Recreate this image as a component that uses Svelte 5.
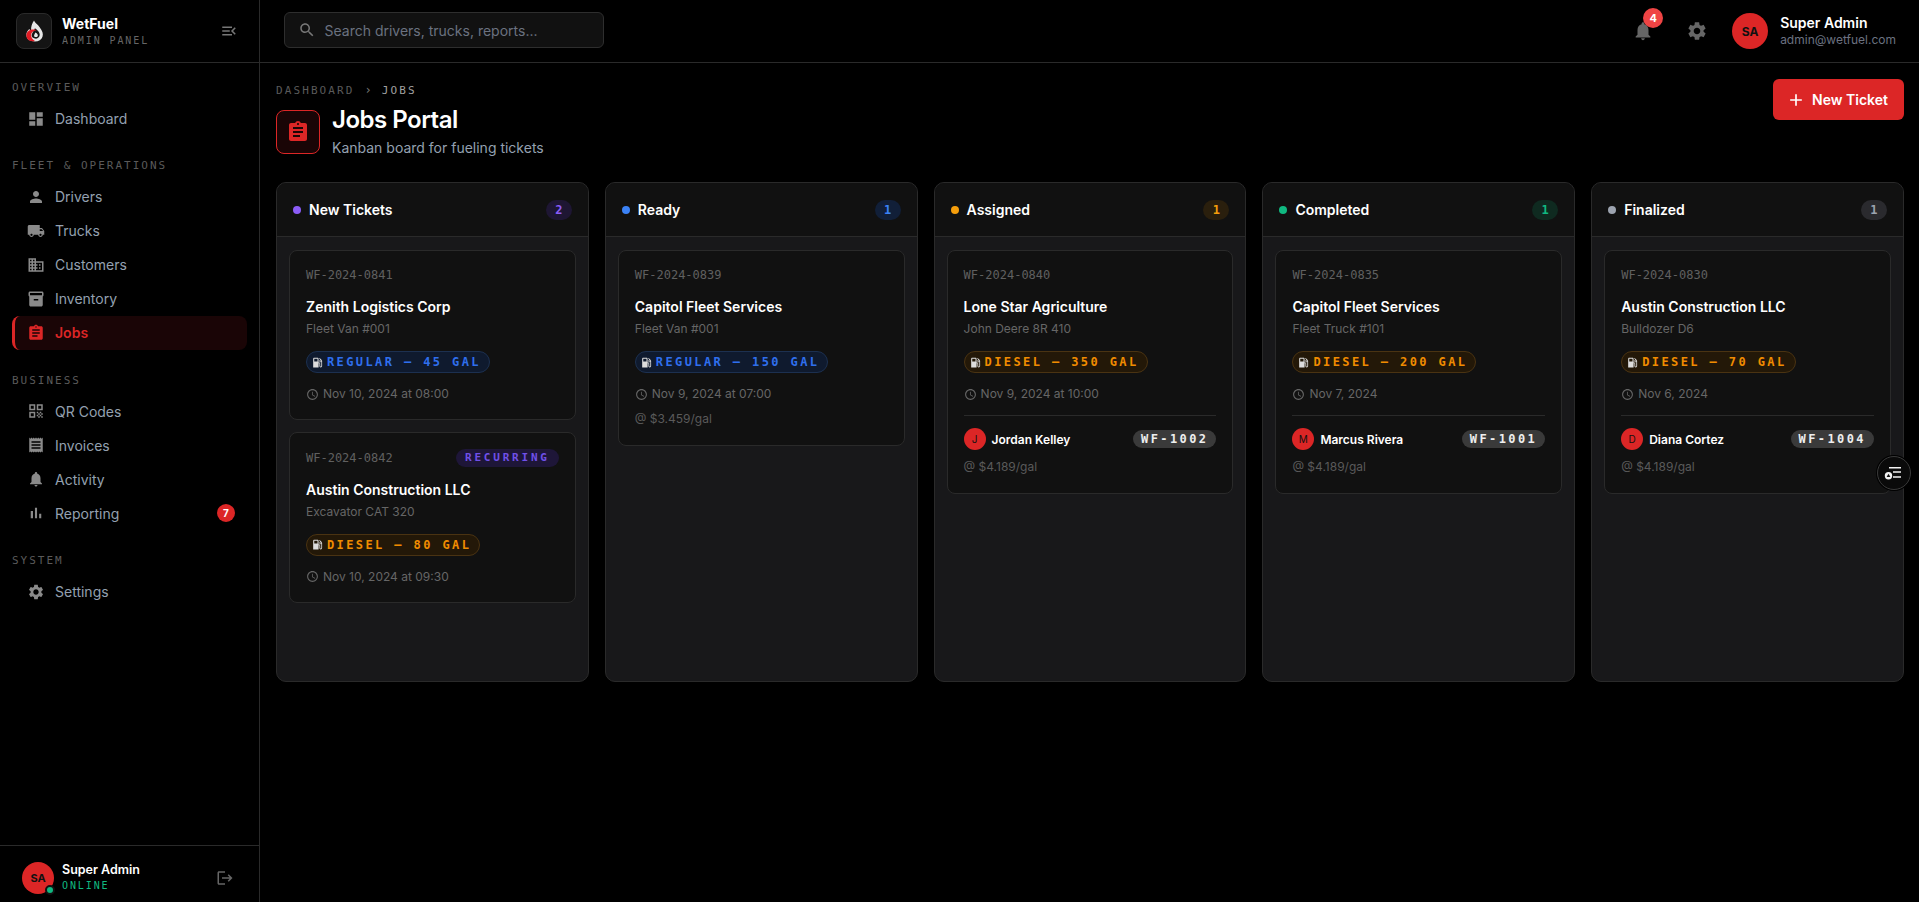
<script>
  const icons = {
    dashboard: 'M3 13h8V3H3v10zm0 8h8v-6H3v6zm10 0h8V11h-8v10zm0-18v6h8V3h-8z',
    person: 'M12 12c2.21 0 4-1.79 4-4s-1.79-4-4-4-4 1.79-4 4 1.79 4 4 4zm0 2c-2.67 0-8 1.34-8 4v2h16v-2c0-2.66-5.33-4-8-4z',
    truck: 'M20 8h-3V4H3c-1.1 0-2 .9-2 2v11h2c0 1.66 1.34 3 3 3s3-1.34 3-3h6c0 1.66 1.34 3 3 3s3-1.34 3-3h2v-5l-3-4zM6 18.5c-.83 0-1.5-.67-1.5-1.5s.67-1.5 1.5-1.5 1.5.67 1.5 1.5-.67 1.5-1.5 1.5zm13.5-9l1.96 2.5H17V9.5h2.5zm-1.5 9c-.83 0-1.5-.67-1.5-1.5s.67-1.5 1.5-1.5 1.5.67 1.5 1.5-.67 1.5-1.5 1.5z',
    business: 'M12 7V3H2v18h20V7H12zM6 19H4v-2h2v2zm0-4H4v-2h2v2zm0-4H4V9h2v2zm0-4H4V5h2v2zm4 12H8v-2h2v2zm0-4H8v-2h2v2zm0-4H8V9h2v2zm0-4H8V5h2v2zm10 12h-8v-2h2v-2h-2v-2h2v-2h-2V9h8v10zm-2-8h-2v2h2v-2zm0 4h-2v2h2v-2z',
    inventory: 'M20 2H4c-1 0-2 .9-2 2v3.01c0 .72.43 1.34 1 1.69V20c0 1.1 1.1 2 2 2h14c.9 0 2-.9 2-2V8.7c.57-.35 1-.97 1-1.69V4c0-1.1-1-2-2-2zm-5 12H9v-2h6v2zm5-7H4V4l16-.02V7z',
    assignment: 'M19 3h-4.18C14.4 1.84 13.3 1 12 1c-1.3 0-2.4.84-2.82 2H5c-1.1 0-2 .9-2 2v14c0 1.1.9 2 2 2h14c1.1 0 2-.9 2-2V5c0-1.1-.9-2-2-2zm-7 0c.55 0 1 .45 1 1s-.45 1-1 1-1-.45-1-1 .45-1 1-1zm2 14H7v-2h7v2zm3-4H7v-2h10v2zm0-4H7V7h10v2z',
    qr: 'M3 11h8V3H3v8zm2-6h4v4H5V5zM3 21h8v-8H3v8zm2-6h4v4H5v-4zM13 3v8h8V3h-8zm6 6h-4V5h4v4zM19 19h2v2h-2zM13 13h2v2h-2zM15 15h2v2h-2zM13 17h2v2h-2zM15 19h2v2h-2zM17 17h2v2h-2zM17 13h2v2h-2zM19 15h2v2h-2z',
    receipt: 'M18 17H6v-2h12v2zm0-4H6v-2h12v2zm0-4H6V7h12v2zM3 22l1.5-1.5L6 22l1.5-1.5L9 22l1.5-1.5L12 22l1.5-1.5L15 22l1.5-1.5L18 22l1.5-1.5L21 22V2l-1.5 1.5L18 2l-1.5 1.5L15 2l-1.5 1.5L12 2l-1.5 1.5L9 2 7.5 3.5 6 2 4.5 3.5 3 2v20z',
    bell: 'M12 22c1.1 0 2-.9 2-2h-4c0 1.1.89 2 2 2zm6-6v-5c0-3.07-1.64-5.64-4.5-6.32V4c0-.83-.67-1.5-1.5-1.5s-1.5.67-1.5 1.5v.68C7.63 5.36 6 7.92 6 11v5l-2 2v1h16v-1l-2-2z',
    chart: 'M5 9.2h3V19H5zM10.6 5h2.8v14h-2.8zm5.6 8H19v6h-2.8z',
    settings: 'M19.14 12.94c.04-.3.06-.61.06-.94 0-.32-.02-.64-.07-.94l2.03-1.58c.18-.14.23-.41.12-.61l-1.92-3.32c-.12-.22-.37-.29-.59-.22l-2.39.96c-.5-.38-1.03-.7-1.62-.94l-.36-2.54c-.04-.24-.24-.41-.48-.41h-3.84c-.24 0-.43.17-.47.41l-.36 2.54c-.59.24-1.13.57-1.62.94l-2.39-.96c-.22-.08-.47 0-.59.22L2.74 8.87c-.12.21-.08.47.12.61l2.03 1.58c-.05.3-.09.63-.09.94s.02.64.07.94l-2.03 1.58c-.18.14-.23.41-.12.61l1.92 3.32c.12.22.37.29.59.22l2.39-.96c.5.38 1.03.7 1.62.94l.36 2.54c.05.24.24.41.48.41h3.84c.24 0 .44-.17.47-.41l.36-2.54c.59-.24 1.13-.56 1.62-.94l2.39.96c.22.08.47 0 .59-.22l1.92-3.32c.12-.22.07-.47-.12-.61l-2.01-1.58zM12 15.6c-1.98 0-3.6-1.62-3.6-3.6s1.62-3.6 3.6-3.6 3.6 1.62 3.6 3.6-1.62 3.6-3.6 3.6z',
    logout: 'M17 7l-1.41 1.41L18.17 11H8v2h10.17l-2.58 2.58L17 17l5-5zM4 5h8V3H4c-1.1 0-2 .9-2 2v14c0 1.1.9 2 2 2h8v-2H4V5z',
    gas: 'M19.77 7.23l.01-.01-3.72-3.72L15 4.56l2.11 2.11c-.94.36-1.61 1.26-1.61 2.33 0 1.38 1.12 2.5 2.5 2.5.36 0 .69-.08 1-.21v7.21c0 .55-.45 1-1 1s-1-.45-1-1V14c0-1.1-.9-2-2-2h-1V5c0-1.1-.9-2-2-2H6c-1.1 0-2 .9-2 2v16h10v-7.5h1.5v5c0 1.38 1.12 2.5 2.5 2.5s2.5-1.12 2.5-2.5V9c0-.69-.28-1.32-.73-1.77zM12 10H6V5h6v5zm6 0c-.55 0-1-.45-1-1s.45-1 1-1 1 .45 1 1-.45 1-1 1z',
    clock: 'M11.99 2C6.47 2 2 6.48 2 12s4.47 10 9.99 10C17.52 22 22 17.52 22 12S17.52 2 11.99 2zM12 20c-4.42 0-8-3.58-8-8s3.58-8 8-8 8 3.58 8 8-3.58 8-8 8zm.5-13H11v6l5.25 3.15.75-1.23-4.5-2.67z',
    add: 'M19 13h-6v6h-2v-6H5v-2h6V5h2v6h6v2z',
    menuOpen: 'M3 18h13v-2H3v2zm0-5h10v-2H3v2zm0-7v2h13V6H3zm18 9.59L17.42 12 21 8.41 19.59 7l-5 5 5 5L21 15.59z',
    search: 'M15.5 14h-.79l-.28-.27C15.41 12.59 16 11.11 16 9.5 16 5.91 13.09 3 9.5 3S3 5.91 3 9.5 5.91 16 9.5 16c1.61 0 3.09-.59 4.23-1.57l.27.28v.79l5 4.99L20.49 19l-4.99-5zm-6 0C7.01 14 5 11.99 5 9.5S7.01 5 9.5 5 14 7.01 14 9.5 11.99 14 9.5 14z'
  };

  const nav = [
    { label: 'OVERVIEW', items: [{ name: 'Dashboard', icon: 'dashboard' }] },
    { label: 'FLEET & OPERATIONS', items: [
      { name: 'Drivers', icon: 'person' },
      { name: 'Trucks', icon: 'truck' },
      { name: 'Customers', icon: 'business' },
      { name: 'Inventory', icon: 'inventory' },
      { name: 'Jobs', icon: 'assignment', active: true }
    ] },
    { label: 'BUSINESS', items: [
      { name: 'QR Codes', icon: 'qr' },
      { name: 'Invoices', icon: 'receipt' },
      { name: 'Activity', icon: 'bell' },
      { name: 'Reporting', icon: 'chart', badge: 7 }
    ] },
    { label: 'SYSTEM', items: [{ name: 'Settings', icon: 'settings' }] }
  ];

  const columns = [
    { title: 'New Tickets', tone: 'purple', count: 2, cards: [
      { id: 'WF-2024-0841', name: 'Zenith Logistics Corp', unit: 'Fleet Van #001', fuel: 'REGULAR — 45 GAL', type: 'regular', date: 'Nov 10, 2024 at 08:00' },
      { id: 'WF-2024-0842', recurring: true, name: 'Austin Construction LLC', unit: 'Excavator CAT 320', fuel: 'DIESEL — 80 GAL', type: 'diesel', date: 'Nov 10, 2024 at 09:30' }
    ] },
    { title: 'Ready', tone: 'blue', count: 1, cards: [
      { id: 'WF-2024-0839', name: 'Capitol Fleet Services', unit: 'Fleet Van #001', fuel: 'REGULAR — 150 GAL', type: 'regular', date: 'Nov 9, 2024 at 07:00', price: '@ $3.459/gal' }
    ] },
    { title: 'Assigned', tone: 'orange', count: 1, cards: [
      { id: 'WF-2024-0840', name: 'Lone Star Agriculture', unit: 'John Deere 8R 410', fuel: 'DIESEL — 350 GAL', type: 'diesel', date: 'Nov 9, 2024 at 10:00', driver: 'Jordan Kelley', initial: 'J', truck: 'WF-1002', price: '@ $4.189/gal' }
    ] },
    { title: 'Completed', tone: 'green', count: 1, cards: [
      { id: 'WF-2024-0835', name: 'Capitol Fleet Services', unit: 'Fleet Truck #101', fuel: 'DIESEL — 200 GAL', type: 'diesel', date: 'Nov 7, 2024', driver: 'Marcus Rivera', initial: 'M', truck: 'WF-1001', price: '@ $4.189/gal' }
    ] },
    { title: 'Finalized', tone: 'gray', count: 1, cards: [
      { id: 'WF-2024-0830', name: 'Austin Construction LLC', unit: 'Bulldozer D6', fuel: 'DIESEL — 70 GAL', type: 'diesel', date: 'Nov 6, 2024', driver: 'Diana Cortez', initial: 'D', truck: 'WF-1004', price: '@ $4.189/gal' }
    ] }
  ];
</script>

{#snippet icon(name, size)}
  <svg class="icon" width={size} height={size} viewBox="0 0 24 24" fill="currentColor" aria-hidden="true"><path d={icons[name]} /></svg>
{/snippet}

<div class="app">
  <aside class="sidebar">
    <div class="brand">
      <div class="logo">
        <svg width="36" height="36" viewBox="0 0 36 36" aria-hidden="true">
          <path fill="#e6e6e6" d="M18 7C19 10 22 11 24 14C27 18 28 21 27 24C26 27 23 29 19 29C14 29 10.500 27 10 23C9.500 20 11 18 13 16C13.500 17 14 17.500 15 17.500C14.500 14 16 10 18 7Z" />
          <path fill="#141414" d="M19 15C22 17 24.500 20 24 22.500C23.500 25 21 26.500 19 26C17 25.500 15.500 24.500 15.500 22.500C15.500 20 18 18 19 15Z" />
          <path fill="#e6e6e6" d="M19.500 19.500C21.500 20.500 22.500 22 22 23.200C21.500 24.500 19.500 24.800 18.500 24C17.500 23 18.500 21.500 19.500 19.500Z" />
          <path fill="#e01b24" d="M10 24C9.500 20 12 17 16 16.500C18 16 20 16.500 21 17.500C17.500 17.500 15 19.500 15 22.500C15 25 16.500 27 19 28.500C15 29.500 11 28 10 24Z" />
        </svg>
      </div>
      <div class="brand-text">
        <div class="brand-name">WetFuel</div>
        <div class="brand-sub">ADMIN PANEL</div>
      </div>
      <span class="collapse">{@render icon('menuOpen', 18)}</span>
    </div>

    <nav class="nav">
      {#each nav as section}
        <section class="nav-section">
          <div class="nav-label">{section.label}</div>
          {#each section.items as item}
            <div class="nav-item" class:active={item.active}>
              {@render icon(item.icon, 18)}
              <span>{item.name}</span>
              {#if item.badge}<b class="nav-badge">{item.badge}</b>{/if}
            </div>
          {/each}
        </section>
      {/each}
    </nav>

    <div class="side-user">
      <div class="avatar av32">SA<i class="online"></i></div>
      <div class="side-user-text">
        <div class="side-name">Super Admin</div>
        <div class="side-status">ONLINE</div>
      </div>
      <span class="logout">{@render icon('logout', 18)}</span>
    </div>
  </aside>

  <div class="content">
    <header class="topbar">
      <div class="search">
        {@render icon('search', 18)}
        <span>Search drivers, trucks, reports...</span>
      </div>
      <div class="top-right">
        <span class="top-icon bell">{@render icon('bell', 22)}<b class="bell-badge">4</b></span>
        <span class="top-icon">{@render icon('settings', 22)}</span>
        <div class="avatar av36">SA</div>
        <div class="top-user">
          <div class="top-name">Super Admin</div>
          <div class="top-mail">admin@wetfuel.com</div>
        </div>
      </div>
    </header>

    <main class="main">
      <div class="page-head">
        <div>
          <div class="crumbs"><span>DASHBOARD</span><em>›</em><strong>JOBS</strong></div>
          <div class="title-row">
            <div class="title-icon">{@render icon('assignment', 24)}</div>
            <div>
              <h1>Jobs Portal</h1>
              <p>Kanban board for fueling tickets</p>
            </div>
          </div>
        </div>
        <button class="new-btn">{@render icon('add', 20)}<span>New Ticket</span></button>
      </div>

      <div class="board">
        {#each columns as col}
          <div class="column">
            <div class="col-head">
              <i class="dot {col.tone}"></i>
              <span class="col-title">{col.title}</span>
              <b class="count {col.tone}">{col.count}</b>
            </div>
            <div class="col-body">
              {#each col.cards as card}
                <article class="card">
                  <div class="card-top">
                    <span class="card-id">{card.id}</span>
                    {#if card.recurring}<span class="recurring">RECURRING</span>{/if}
                  </div>
                  <div class="card-name">{card.name}</div>
                  <div class="card-unit">{card.unit}</div>
                  <div class="fuel {card.type}">{@render icon('gas', 13)}<span>{card.fuel}</span></div>
                  <div class="card-date">{@render icon('clock', 13)}<span>{card.date}</span></div>
                  {#if card.driver}
                    <div class="driver">
                      <span class="driver-av">{card.initial}</span>
                      <span class="driver-name">{card.driver}</span>
                      <span class="truck">{card.truck}</span>
                    </div>
                  {/if}
                  {#if card.price}<div class="price">{card.price}</div>{/if}
                </article>
              {/each}
            </div>
          </div>
        {/each}
      </div>
    </main>
  </div>

  <div class="float-btn">
    <svg width="20" height="20" viewBox="0 0 20 20" aria-hidden="true">
      <path d="M5 4.700h12M9 9h8M9 14h8" stroke="#f2f2f2" stroke-width="1.500" fill="none" />
      <circle cx="4.500" cy="12.700" r="3.700" fill="#f2f2f2" />
      <path d="M4.500 10.700l1.900 3.300H2.600z" fill="#111" />
    </svg>
  </div>
</div>

<style>
  :global(body) { background: #000; font-family: Inter, "Noto Sans", sans-serif; }
  .app { display: flex; height: 902px; overflow: hidden; background: #000; color: #fff; position: relative; }
  .icon { display: block; flex: none; }

  .sidebar { width: 260px; flex: none; display: flex; flex-direction: column; border-right: 1px solid #2a2a2a; box-sizing: border-box; }
  .brand { height: 63px; flex: none; box-sizing: border-box; border-bottom: 1px solid #2a2a2a; display: flex; align-items: center; padding: 0 16px; gap: 10px; }
  .logo { width: 36px; height: 36px; border-radius: 8px; background: #141414; border: 1px solid #2a2a2a; box-sizing: border-box; display: flex; align-items: center; justify-content: center; overflow: hidden; }
  .brand-text { flex: 1; }
  .brand-name { font-size: 14px; font-weight: 700; line-height: 18px; }
  .brand-sub { font-family: "DejaVu Sans Mono", monospace; font-size: 10px; letter-spacing: 1.9px; color: #666; line-height: 14px; margin-top: 1px; }
  .collapse { color: #777; margin-right: 5px; }

  .nav { flex: 1; padding: 17px 12px 0; }
  .nav-section { margin-bottom: 22.9px; }
  .nav-label { font-family: "DejaVu Sans Mono", monospace; font-size: 11px; letter-spacing: 2px; line-height: 15px; color: #5a5a5a; margin-bottom: 6.5px; }
  .nav-item { height: 34px; display: flex; align-items: center; gap: 10px; padding: 0 12px; border-left: 3px solid transparent; border-radius: 8px; font-size: 14px; font-weight: 400; color: #94a0b0; box-sizing: border-box; }
  .nav-item .icon { color: #8a8a8a; }
  .nav-item span { flex: 1; }
  .nav-item.active { background: #1a0506; border-left-color: #dc2626; color: #dc2626; font-weight: 600; }
  .nav-item.active .icon { color: #dc2626; }
  .nav-badge { width: 18px; height: 18px; border-radius: 50%; background: #dc2626; color: #fff; font-size: 10px; display: flex; align-items: center; justify-content: center; }

  .side-user { height: 57px; flex: none; box-sizing: border-box; border-top: 1px solid #2a2a2a; display: flex; padding: 16px 22px 0; gap: 8px; align-items: flex-start; }
  .avatar { border-radius: 50%; background: #dc2626; color: #111; font-weight: 700; display: flex; align-items: center; justify-content: center; flex: none; position: relative; }
  .av32 { width: 32px; height: 32px; font-size: 11px; }
  .av36 { width: 36px; height: 36px; font-size: 12px; }
  .online { position: absolute; right: -1px; bottom: -1px; width: 6px; height: 6px; border-radius: 50%; background: #10b981; border: 2px solid #111; }
  .side-user-text { flex: 1; }
  .side-name { font-size: 12.500px; font-weight: 600; line-height: 16px; }
  .side-status { font-family: "DejaVu Sans Mono", monospace; font-size: 10px; letter-spacing: 1.9px; color: #10b981; line-height: 14px; margin-top: 1px; }
  .logout { color: #666; margin: 7px 3px 0 0; }

  .content { flex: 1; min-width: 0; display: flex; flex-direction: column; }
  .topbar { height: 63px; flex: none; box-sizing: border-box; border-bottom: 1px solid #2a2a2a; display: flex; align-items: center; justify-content: space-between; padding: 0 23px 0 24px; }
  .search { width: 320px; height: 36px; margin-bottom: 2px; box-sizing: border-box; background: #111; border: 1px solid #2e2e2e; border-radius: 6px; display: flex; align-items: center; gap: 8.500px; padding: 0 13px; color: #6b7280; font-size: 14px; }
  .search .icon { color: #777; }
  .top-right { display: flex; align-items: center; }
  .top-icon { color: #666; display: block; position: relative; margin-right: 32px; }
  .top-icon:nth-child(2) { margin-right: 24px; }
  .bell-badge { position: absolute; left: 11px; top: -12px; width: 20px; height: 20px; border-radius: 50%; background: #ef4444; color: #fff; font-size: 11px; display: flex; align-items: center; justify-content: center; }
  .top-user { margin: 0 0 2px 12px; }
  .top-name { font-size: 14px; font-weight: 600; line-height: 18px; }
  .top-mail { font-size: 12px; color: #6b7280; line-height: 15px; }

  .main { flex: 1; padding: 16px 15px 16px 16px; }
  .page-head { display: flex; justify-content: space-between; align-items: flex-start; margin-bottom: 25px; }
  .crumbs { display: flex; align-items: center; gap: 10px; font-family: "DejaVu Sans Mono", monospace; font-size: 11px; letter-spacing: 2.1px; line-height: 15px; color: #5a5a5a; padding-top: 4px; margin-bottom: 9px; }
  .crumbs em { font-style: normal; letter-spacing: 0; color: #777; font-size: 12px; }
  .crumbs strong { font-weight: 400; color: #a0a0a0; }
  .title-row { display: flex; align-items: center; gap: 12px; }
  .title-icon { width: 44px; height: 44px; box-sizing: border-box; border: 1px solid #dc2626; background: #1a0506; border-radius: 8px; color: #dc2626; display: flex; align-items: center; justify-content: center; }
  h1 { margin: 0; font-size: 24px; font-weight: 600; line-height: 26px; letter-spacing: -0.5px; }
  p { margin: 6px 0 0; font-size: 14px; color: #94a0b0; line-height: 18px; }
  .new-btn { width: 131px; height: 41px; background: #dc2626; color: #fff; border: 0; border-radius: 6px; font: 600 14px Inter, sans-serif; display: flex; align-items: center; gap: 6px; padding: 0 0 0 13px; }

  .board { display: grid; grid-template-columns: repeat(5, 1fr); gap: 16px; }
  .column { height: 500px; box-sizing: border-box; border: 1px solid #2a2a2a; border-radius: 10px; background: #18181a; overflow: hidden; }
  .col-head { height: 54px; box-sizing: border-box; background: #111; border-bottom: 1px solid #2a2a2a; display: flex; align-items: center; padding: 0 16px; gap: 8px; }
  .col-title { flex: 1; font-size: 14px; font-weight: 600; }
  .dot { width: 8px; height: 8px; border-radius: 50%; }
  .count { min-width: 26px; height: 20px; border-radius: 10px; font: 700 12px "DejaVu Sans Mono", monospace; display: flex; align-items: center; justify-content: center; }
  .purple.dot { background: #8b5cf6; } .blue.dot { background: #3b82f6; } .orange.dot { background: #f59e0b; } .green.dot { background: #10b981; } .gray.dot { background: #9ca3af; }
  .purple.count { color: #8b5cf6; background: #1e1633; }
  .blue.count { color: #3b82f6; background: #111f38; }
  .orange.count { color: #f59e0b; background: #2a1f0d; }
  .green.count { color: #10b981; background: #0f2a20; }
  .gray.count { color: #9ca3af; background: #2a2a2e; }

  .col-body { padding: 12.500px 12px; display: flex; flex-direction: column; gap: 12px; }
  .card { background: #111; border: 1px solid #2a2a2a; border-radius: 8px; padding: 16px 16px 17px; }
  .card-top { display: flex; align-items: center; justify-content: space-between; height: 17.500px; }
  .card-id { font: 12px "DejaVu Sans Mono", monospace; color: #606060; }
  .recurring { height: 18px; padding: 0 9px; border-radius: 9px; background: #1e1638; color: #7050e8; font: 700 11px/18px "DejaVu Sans Mono", monospace; letter-spacing: 2.800px; }
  .card-name { font-size: 14px; font-weight: 600; line-height: 18px; margin-top: 14px; }
  .card-unit { font-size: 12px; color: #666; line-height: 16px; margin-top: 5px; }
  .fuel { display: inline-flex; align-items: center; gap: 3px; height: 22px; box-sizing: border-box; border-radius: 11px; border: 1px solid; padding: 0 8px 0 4px; margin-top: 14px; font: 700 12px "DejaVu Sans Mono", monospace; letter-spacing: 2.400px; vertical-align: top; }
  .fuel .icon { color: #ddd; }
  .regular { color: #2f6fed; background: #0f1a2e; border-color: #1c3050; }
  .diesel { color: #f08c00; background: #231808; border-color: #4a3312; }
  .card-date { display: flex; align-items: center; gap: 4px; font-size: 12px; color: #666; line-height: 16px; margin-top: 13px; }
  .driver { display: flex; align-items: center; gap: 6px; border-top: 1px solid #2a2a2a; margin-top: 13px; padding-top: 12px; }
  .driver-av { width: 22px; height: 22px; border-radius: 50%; background: #dc2626; color: #111; font-size: 10px; display: flex; align-items: center; justify-content: center; }
  .driver-name { flex: 1; font-size: 12px; font-weight: 600; }
  .truck { height: 18px; padding: 0 8px; border-radius: 9px; background: #3a3a3a; color: #eee; font: 700 12px/18px "DejaVu Sans Mono", monospace; letter-spacing: 2.400px; }
  .price { font-size: 12px; color: #5a5a5a; line-height: 18px; margin-top: 8px; }

  .float-btn { position: absolute; left: 1877px; top: 456px; width: 34px; height: 34px; box-sizing: border-box; border-radius: 50%; background: #0a0a0a; border: 1px solid #3a3a3a; box-shadow: 0 0 0 1px #000; display: flex; align-items: center; justify-content: center; }
</style>
